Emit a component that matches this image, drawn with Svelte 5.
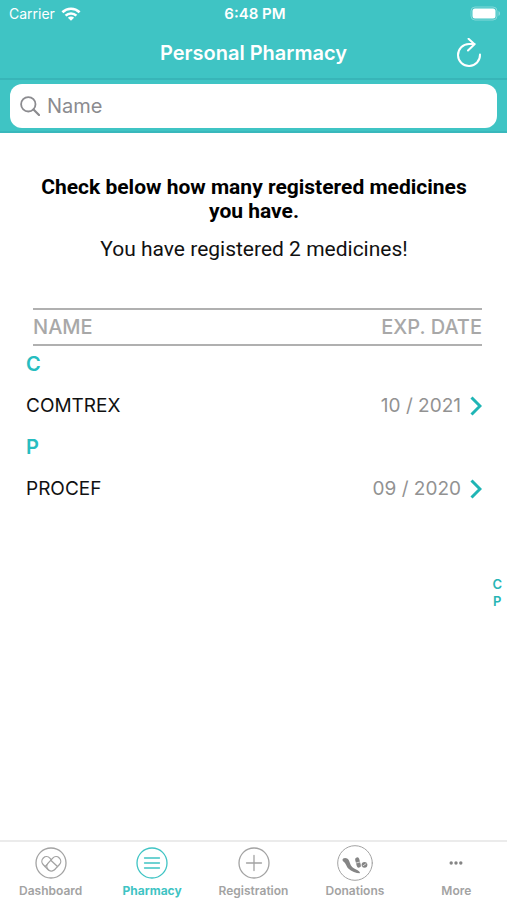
<script>
  const groups = [
    { letter: 'C', items: [{ name: 'COMTREX', date: '10 / 2021' }] },
    { letter: 'P', items: [{ name: 'PROCEF', date: '09 / 2020' }] }
  ];
  const tabs = ['Dashboard', 'Pharmacy', 'Registration', 'Donations', 'More'];
  let active = $state('Pharmacy');
  let query = $state('');
</script>

<div class="app">
  <header>
    <div class="status">
      <span class="carrier">
        Carrier
        <svg width="20" height="14" viewBox="0 0 20 14" fill="none" stroke="#fff" stroke-width="2.6">
          <path d="M1.4 5.2a12.4 12.4 0 0 1 17.2 0" />
          <path d="M4.6 8.6a7.8 7.8 0 0 1 10.8 0" />
          <path d="M10 13.8 6.9 10.7a4.4 4.4 0 0 1 6.2 0z" fill="#fff" stroke="none" />
        </svg>
      </span>
      <span class="time">6:48 PM</span>
      <span class="battery">
        <svg width="31" height="15" viewBox="0 0 31 15">
          <rect x="1" y="1" width="26" height="13" rx="4" fill="none" stroke="#fff" stroke-opacity=".35" />
          <rect x="2.5" y="2.5" width="23" height="10" rx="2.5" fill="#fff" />
          <path d="M28.5 5v5c2-.8 2-4.2 0-5z" fill="#fff" fill-opacity=".4" />
        </svg>
      </span>
    </div>
    <div class="nav">
      <h1>Personal Pharmacy</h1>
      <button class="refresh" aria-label="Refresh">
        <svg width="26" height="30" viewBox="0 0 26 30" fill="none" stroke="#fff" stroke-width="2" stroke-linecap="round" stroke-linejoin="round">
          <path d="M24 16.5A11 11 0 1 1 13 6h5.500" />
          <path d="M12.5 0.8 18.5 6.2 12 12.5" />
        </svg>
      </button>
    </div>
    <div class="search">
      <label>
        <svg width="20" height="20" viewBox="0 0 20 20" fill="none" stroke="#8b8b8f" stroke-width="1.8" stroke-linecap="round">
          <circle cx="8.3" cy="8.3" r="7.2" />
          <path d="M13.5 13.5 19 19" stroke-width="2.2" />
        </svg>
        <input type="text" placeholder="Name" aria-label="Name" bind:value={query} />
      </label>
    </div>
  </header>

  <main>
    <h2>Check below how many registered medicines you have.</h2>
    <p>You have registered 2 medicines!</p>
    <table>
      <thead>
        <tr><th>NAME</th><th>EXP. DATE</th></tr>
      </thead>
      {#each groups as group}
        <tbody id={group.letter}>
          <tr class="group"><th>{group.letter}</th></tr>
          {#each group.items as item}
            <tr class="item">
              <td>{item.name}</td>
              <td class="date">
                {item.date}
                <svg width="12" height="20" viewBox="0 0 12 20" fill="none" stroke="#1fb5b5" stroke-width="3">
                  <path d="M1.5 1.5 10 10 1.5 18.5" />
                </svg>
              </td>
            </tr>
          {/each}
        </tbody>
      {/each}
    </table>
    <nav class="index" aria-label="Letters">
      {#each groups as group}
        <a href={'#' + group.letter}>{group.letter}</a>
      {/each}
    </nav>
  </main>

  <nav class="tabs">
    {#each tabs as tab}
      <button class:active={active === tab} onclick={() => (active = tab)}>
        <svg width="38" height="38" viewBox="0 0 38 38" fill="none" stroke="currentColor" stroke-width="1.3" stroke-linecap="round" stroke-linejoin="round">
          {#if tab === 'Dashboard'}
            <circle cx="19" cy="19" r="15" />
            <g transform="rotate(-43 16.8 19.8)">
              <rect x="12.2" y="11.8" width="9.2" height="16" rx="4.6" />
              <path d="M12.2 19.3h9.2" />
            </g>
            <g transform="rotate(43 21.800 19.800)">
              <rect x="17.200" y="11.800" width="9.200" height="16" rx="4.600" fill="#fff" />
              <path d="M17.200 19.300h9.200" />
            </g>
          {:else if tab === 'Pharmacy'}
            <circle cx="19" cy="19" r="15" />
            <path d="M11.5 14h15M11.5 19h15M11.5 24h15" />
          {:else if tab === 'Registration'}
            <circle cx="19" cy="19" r="15" />
            <path d="M11.5 19h15M19 11.5v15" />
          {:else if tab === 'Donations'}
            <circle cx="19" cy="19" r="17.3" stroke-width="1" />
            <g fill="#858585" stroke="none">
              <path d="M6.5 16.2c-.2-2 2.600-3 4.700-1.600 2.300 1.500 2.300 4.200 3.600 6.600 1.500 2.800 4.200 3.700 6.800 5 1.500.8 2.800 1.900 2.200 3.100-3.500-.1-8.500-1.600-11.500-4.800-1.700-1.800-2-3.600-3.200-5.300-1-1.400-2.100-1.900-2.600-3z" />
              <circle cx="28.5" cy="20.8" r="2.9" />
            </g>
            <path d="M21.2 15.5l1.600 6" stroke="#858585" stroke-width="4.200" />
            <path d="M19.5 19.200l5-1.400M27 21.800l3-2" stroke="#fff" stroke-width=".7" />
          {:else}
            <g fill="#858585" stroke="none">
              <circle cx="14.2" cy="19" r="1.7" /><circle cx="19" cy="19" r="1.7" /><circle cx="23.8" cy="19" r="1.7" />
            </g>
          {/if}
        </svg>
        <span>{tab}</span>
      </button>
    {/each}
  </nav>
</div>

<style>
  :global(body) { margin: 0; background: #fff; }
  .app {
    min-height: 100vh;
    display: flex;
    flex-direction: column;
    font-family: Inter, "Liberation Sans", sans-serif;
    color: #111;
  }
  button { border: 0; background: none; padding: 0; font: inherit; color: inherit; cursor: pointer; }
  svg { display: block; flex: none; }
  header { background: #3fc4c4; color: #fff; }
  .status {
    display: grid;
    grid-template-columns: 1fr auto 1fr;
    align-items: center;
    height: 27px;
    padding: 0 6px 0 9px;
    font-size: 14px;
  }
  .carrier { display: flex; align-items: center; gap: 6px; }
  .time { font-size: 15px; font-weight: 600; }
  .battery { justify-self: end; }
  .nav {
    display: grid;
    grid-template-columns: 1fr auto 1fr;
    align-items: center;
    height: 51px;
    padding: 0 25px;
    border-bottom: 2px solid #38b5b8;
  }
  h1 { grid-column: 2; margin: 0; font-size: 20px; font-weight: 600; line-height: 24px; }
  .refresh { justify-self: end; }
  .search { padding: 4px 10px 3px; border-bottom: 2px solid #39b8bc; }
  label {
    display: flex;
    align-items: center;
    gap: 7px;
    height: 44px;
    padding: 0 10px;
    border-radius: 12px;
    background: #fff;
  }
  input {
    flex: 1;
    min-width: 0;
    border: 0;
    padding: 0;
    outline: none;
    background: none;
    font: 20px/24px Inter, "Liberation Sans", sans-serif;
    color: #111;
  }
  input::placeholder { color: #8b8b8f; opacity: 1; }
  main { flex: 1; position: relative; padding: 42px 25px 0 26px; }
  h2, p { font-family: Roboto, sans-serif; font-size: 21px; line-height: 24px; text-align: center; color: #000; }
  h2 { margin: 0; padding: 0 10px; font-weight: 700; }
  p { margin: 14px 0 47px; color: #111; }
  table, thead, tbody { display: block; }
  tr { display: flex; align-items: center; justify-content: space-between; }
  th, td { padding: 0; font-size: 19px; line-height: 24px; }
  thead tr {
    height: 34px;
    margin-left: 7px;
    border-top: 2px solid #b0b0b0;
    border-bottom: 2px solid #b0b0b0;
  }
  thead th { color: #a8a8a8; font-size: 20px; font-weight: 500; }
  .group { height: 36px; }
  .group th { color: #27bdc0; font-size: 20px; font-weight: 600; }
  .item { height: 47px; }
  .date { display: flex; align-items: center; gap: 9px; color: #929292; }
  .index {
    position: absolute;
    right: 5px;
    bottom: 230px;
    display: flex;
    flex-direction: column;
    text-align: center;
  }
  .index a { color: #27b5b5; font-size: 13px; font-weight: 600; line-height: 17px; text-decoration: none; }
  .tabs {
    display: flex;
    height: 58px;
    border-top: 2px solid #ebebeb;
  }
  .tabs button {
    flex: 1;
    display: flex;
    flex-direction: column;
    align-items: center;
    gap: 1px;
    padding-top: 2px;
    color: #a3a3a3;
    font-size: 12px;
    font-weight: 600;
    line-height: 16px;
  }
  .tabs .active { color: #3fc4c4; font-weight: 700; }
</style>
